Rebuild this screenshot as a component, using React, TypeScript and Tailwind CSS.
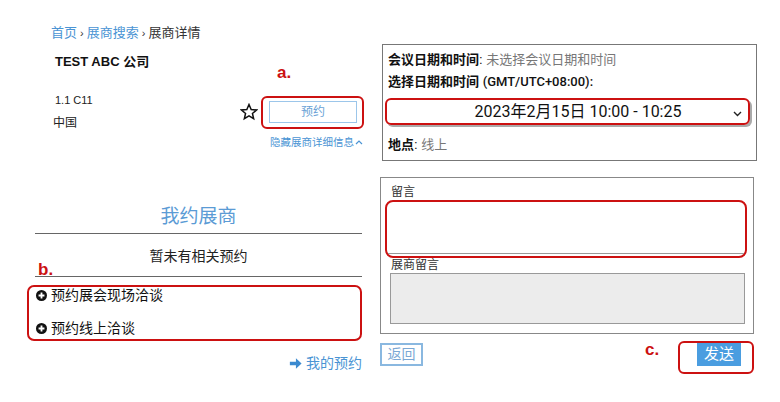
const cjk = "font-['Liberation_Sans','Noto_Sans_CJK_SC',sans-serif]";

function StarIcon() {
  return (
    <svg width="18" height="18" viewBox="0 0 24 24" fill="none" stroke="#111" strokeWidth="2" strokeLinejoin="miter">
      <polygon points="12,2 14.9,8.6 22,9.3 16.6,14 18.2,21 12,17.3 5.8,21 7.4,14 2,9.3 9.1,8.6" />
    </svg>
  );
}

function PlusCircle() {
  return (
    <svg width="11" height="11" viewBox="0 0 12 12">
      <circle cx="6" cy="6" r="6" fill="#111" />
      <path d="M6 2.8v6.4M2.8 6h6.4" stroke="#fff" strokeWidth="2" />
    </svg>
  );
}

function ArrowIcon() {
  return (
    <svg width="13" height="13" viewBox="0 0 12 12">
      <path d="M0.8 4.4h5.6V1.2L11.6 6 6.4 10.8V7.6H0.8z" fill="#3b8ad0" />
    </svg>
  );
}

function Chevron() {
  return (
    <svg width="9" height="6" viewBox="0 0 9 6" fill="none" stroke="#222" strokeWidth="1.4">
      <path d="M1 1l3.5 3.5L8 1" />
    </svg>
  );
}

function ChevronUp() {
  return (
    <svg width="8" height="5" viewBox="0 0 8 5" fill="none" stroke="#4a94d4" strokeWidth="1.2">
      <path d="M1 4l3-3 3 3" />
    </svg>
  );
}

function LeftPanel() {
  return (
    <div className="w-[380px] shrink-0 pt-[26px]">
      <div className={`pl-[51px] text-[13px] leading-[14px] text-[#333] ${cjk}`}>
        <span className="text-[#4a94d4]">首页</span>
        <span className="text-[11px]"> › </span>
        <span className="text-[#4a94d4]">展商搜索</span>
        <span className="text-[11px]"> › </span>
        <span>展商详情</span>
      </div>
      <div className={`mt-[15px] pl-[55px] text-[13px] font-bold leading-[14px] text-[#111] ${cjk}`}>
        TEST ABC 公司
      </div>

      <div className="mt-[21px] flex">
        <div className={`pl-[55px] text-[#222] ${cjk}`}>
          <div className="mt-[3px] text-[11px] leading-[14px]">1.1 C11</div>
          <div className="-ml-[2px] mt-[9px] text-[12px] leading-[14px]">中国</div>
        </div>
        <div className="ml-auto mr-[16px] w-[124px]">
          <div className="flex items-start">
            <div className="mt-[13px]">
              <StarIcon />
            </div>
            <div className="relative ml-[3px] mt-[6px] h-[33px] w-[103px] rounded-[6px] border-2 border-[#cc1111]">
              <span className="absolute -top-[33px] left-[14px] font-['Liberation_Sans',sans-serif] text-[17px] font-bold leading-[16px] text-[#cc1111]">
                a.
              </span>
              <div className={`ml-[6px] mt-[3px] flex h-[22px] w-[88px] items-center justify-center border border-[#9cc6ea] text-[12px] text-[#6aa2d6] ${cjk}`}>
                预约
              </div>
            </div>
          </div>
          <div className={`mt-[7px] flex items-center gap-[1px] pl-[30px] text-[10.5px] leading-[12px] text-[#4a94d4] ${cjk}`}>
            <span>隐藏展商详细信息</span>
            <ChevronUp />
          </div>
        </div>
      </div>

      <div className={`ml-[35px] mt-[58px] w-[327px] ${cjk}`}>
        <div className="text-center text-[19px] leading-[22px] text-[#5b9bd5]">我约展商</div>
        <div className="mt-[5px] h-px bg-[#666]" />
        <div className="mt-[14px] text-center text-[14px] leading-[16px] text-[#222]">暂未有相关预约</div>
        <div className="relative mt-[12px] h-px bg-[#666]">
          <span className="absolute -top-[14px] left-[3px] font-['Liberation_Sans',sans-serif] text-[17px] font-bold leading-[16px] text-[#cc1111]">
            b.
          </span>
        </div>
        <div className="-ml-[8px] mt-[8px] h-[56px] w-[335px] rounded-[7px] border-2 border-[#cc1111] pl-[7px] text-[14px] leading-[16px] text-[#111]">
          <div className="flex items-center gap-[4px]">
            <PlusCircle />
            <span>预约展会现场洽谈</span>
          </div>
          <div className="mt-[17px] flex items-center gap-[4px]">
            <PlusCircle />
            <span>预约线上洽谈</span>
          </div>
        </div>
        <div className="mt-[14px] flex items-center justify-end gap-[4px] text-[14px] leading-[16px] text-[#4a94d4]">
          <ArrowIcon />
          <span>我的预约</span>
        </div>
      </div>
    </div>
  );
}

function RightPanel() {
  return (
    <div className={`flex-1 pt-[44px] ${cjk}`}>
      <div className="ml-[2px] h-[117px] w-[375px] border border-[#777] pl-[5px] pt-[8px] text-[13px] leading-[14px]">
        <div className="text-[#111]">
          <span className="font-bold">会议日期和时间</span>
          <span>: </span>
          <span className="text-[#777]">未选择会议日期和时间</span>
        </div>
        <div className="mt-[8px] font-bold text-[#111]">
          选择日期和时间 <span className="font-['Roboto',sans-serif] font-medium">(GMT/UTC+08:00):</span>
        </div>
        <div className="-ml-[3px] mt-[9px] flex h-[27px] w-[365px] items-center rounded-[6px] border-2 border-[#cc1111] shadow-[2px_2px_0_#aaa]">
          <span className="flex-1 pl-[36px] text-center font-['Roboto','Noto_Sans_CJK_SC',sans-serif] text-[16px] leading-[18px] text-[#111]">
            2023年2月15日 10:00 - 10:25
          </span>
          <span className="mr-[6px] mt-[4px]">
            <Chevron />
          </span>
        </div>
        <div className="mt-[13px] text-[#111]">
          <span className="font-bold">地点</span>
          <span>: </span>
          <span className="text-[#777]">线上</span>
        </div>
      </div>

      <div className="mt-[16px] h-[157px] w-[374px] border border-[#888] pl-[10px] pt-[7px] text-[12px] leading-[14px] text-[#333]">
        <div>留言</div>
        <div className="-ml-[6px] mt-[1px] h-[58px] w-[362px] rounded-[8px] border-2 border-[#cc1111] p-[1px]">
          <div className="h-[51px] border-b border-[#999]" />
        </div>
        <div>展商留言</div>
        <div className="-ml-[1px] mt-[1px] h-[51px] w-[355px] border border-[#999] bg-[#ececec]" />
      </div>

      <div className="mt-[7px] flex w-[374px] items-start justify-between">
        <div className="mt-[2px] flex h-[23px] w-[43px] items-center justify-center border-2 border-[#8ab8e0] text-[14px] text-[#7aa7d4]">
          返回
        </div>
        <div className="relative h-[33px] w-[76px] rounded-[6px] border-2 border-[#cc1111]">
          <span className="absolute -left-[35px] -top-[1px] font-['Liberation_Sans',sans-serif] text-[17px] font-bold leading-[16px] text-[#cc1111]">
            c.
          </span>
          <div className="ml-[17px] flex h-[23px] w-[44px] items-center justify-center bg-[#4a9de0] text-[15px] text-white">
            发送
          </div>
        </div>
      </div>
    </div>
  );
}

export default function App() {
  return (
    <div className="flex h-[402px] w-[780px] bg-white">
      <LeftPanel />
      <RightPanel />
    </div>
  );
}
